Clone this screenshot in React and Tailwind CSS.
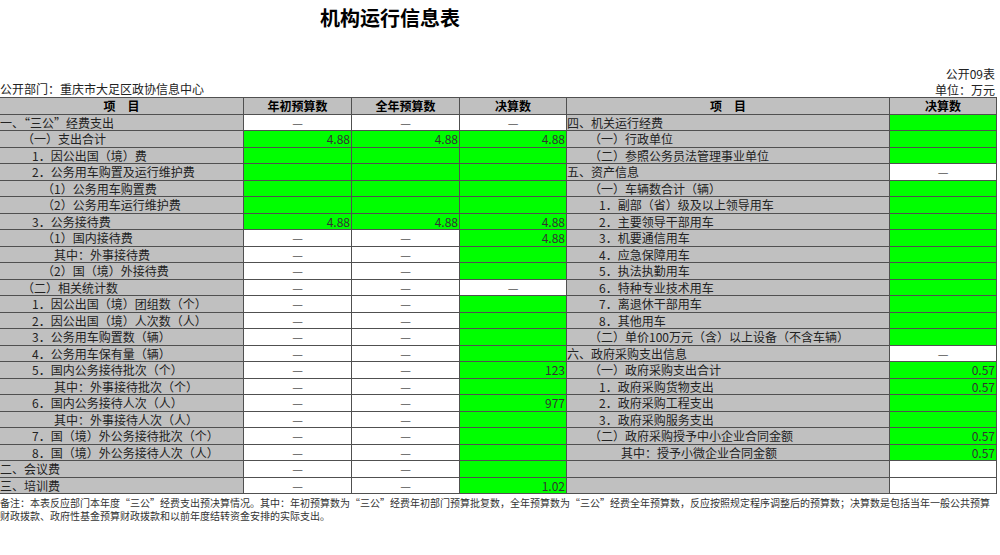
import React from 'react';

const G = 'g', W = 'w';
// left rows: [label, indent, c1, c2, c3] each cell: [bg, text]
const left = [
  ['一、“三公”经费支出', 0, [W, '—'], [W, '—'], [W, '—']],
  ['（一）支出合计', 1, [G, '4.88'], [G, '4.88'], [G, '4.88']],
  ['1．因公出国（境）费', 2, [G], [G], [G]],
  ['2．公务用车购置及运行维护费', 2, [G], [G], [G]],
  ['（1）公务用车购置费', 3, [G], [G], [G]],
  ['（2）公务用车运行维护费', 3, [G], [G], [G]],
  ['3．公务接待费', 2, [G, '4.88'], [G, '4.88'], [G, '4.88']],
  ['（1）国内接待费', 3, [W, '—'], [W, '—'], [G, '4.88']],
  ['其中：外事接待费', 4, [W, '—'], [W, '—'], [G]],
  ['（2）国（境）外接待费', 3, [W, '—'], [W, '—'], [G]],
  ['（二）相关统计数', 1, [W, '—'], [W, '—'], [W, '—']],
  ['1．因公出国（境）团组数（个）', 2, [W, '—'], [W, '—'], [G]],
  ['2．因公出国（境）人次数（人）', 2, [W, '—'], [W, '—'], [G]],
  ['3．公务用车购置数（辆）', 2, [W, '—'], [W, '—'], [G]],
  ['4．公务用车保有量（辆）', 2, [W, '—'], [W, '—'], [G]],
  ['5．国内公务接待批次（个）', 2, [W, '—'], [W, '—'], [G, '123']],
  ['其中：外事接待批次（个）', 4, [W, '—'], [W, '—'], [G]],
  ['6．国内公务接待人次（人）', 2, [W, '—'], [W, '—'], [G, '977']],
  ['其中：外事接待人次（人）', 4, [W, '—'], [W, '—'], [G]],
  ['7．国（境）外公务接待批次（个）', 2, [W, '—'], [W, '—'], [G]],
  ['8．国（境）外公务接待人次（人）', 2, [W, '—'], [W, '—'], [G]],
  ['二、会议费', 0, [W, '—'], [W, '—'], [G]],
  ['三、培训费', 0, [W, '—'], [W, '—'], [G, '1.02']],
];

const right = [
  ['四、机关运行经费', 0, [G]],
  ['（一）行政单位', 1, [G]],
  ['（二）参照公务员法管理事业单位', 1, [G]],
  ['五、资产信息', 0, [W, '—']],
  ['（一）车辆数合计（辆）', 1, [G]],
  ['1．副部（省）级及以上领导用车', 2, [G]],
  ['2．主要领导干部用车', 2, [G]],
  ['3．机要通信用车', 2, [G]],
  ['4．应急保障用车', 2, [G]],
  ['5．执法执勤用车', 2, [G]],
  ['6．特种专业技术用车', 2, [G]],
  ['7．离退休干部用车', 2, [G]],
  ['8．其他用车', 2, [G]],
  ['（二）单价100万元（含）以上设备（不含车辆）', 1, [G]],
  ['六、政府采购支出信息', 0, [W, '—']],
  ['（一）政府采购支出合计', 1, [G, '0.57']],
  ['1．政府采购货物支出', 2, [G, '0.57']],
  ['2．政府采购工程支出', 2, [G]],
  ['3．政府采购服务支出', 2, [G]],
  ['（二）政府采购授予中小企业合同金额', 1, [G, '0.57']],
  ['其中：授予小微企业合同金额', 4, [G, '0.57']],
  ['', 0, [W]],
  ['', 0, [W]],
];

const indents = ['pl-0', 'pl-[22px]', 'pl-[32px]', 'pl-[42px]', 'pl-[54px]'];
const cellB = 'border-r border-b border-[#505050] h-[16.5px] leading-[16px] overflow-hidden whitespace-nowrap';

const Val = ({ c }) => {
  const [bg, t] = c;
  const dash = t === '—';
  return (
    <div className={`${cellB} ${bg === G ? 'bg-[#00ff00]' : 'bg-white'} ${dash ? 'text-center text-[#555]' : 'text-right pr-[1px] text-[#333]'}`}>
      {t || ''}
    </div>
  );
};

const Label = ({ text, ind }) => (
  <div className={`${cellB} bg-[#c0c0c0] text-[#222] ${indents[ind]}`}>{text}</div>
);

export default function App() {
  const head = 'bg-[#c0c0c0] font-bold text-center text-black ' + cellB;
  return (
    <div className="w-[1000px] h-[555px] bg-white text-[12px] text-[#222]" style={{ fontFamily: '"Noto Sans CJK SC", "Liberation Sans", sans-serif' }}>
      <div className="h-[36px] pt-[4px] text-[20px] font-bold text-black pl-[320px] leading-[28px]">机构运行信息表</div>
      <div className="h-[61px] flex items-end justify-between pr-[5px] leading-[14px]">
        <div className="pb-[1px]">公开部门：重庆市大足区政协信息中心</div>
        <div className="text-right">
          <div className="pb-[2px]">公开09表</div>
          <div>单位：万元</div>
        </div>
      </div>
      <div className="grid grid-cols-[244px_108px_108px_107px_323px_107px] w-[997px] border-t border-[#505050]">
        <div className={head}>项　目</div>
        <div className={head}>年初预算数</div>
        <div className={head}>全年预算数</div>
        <div className={head}>决算数</div>
        <div className={head}>项　目</div>
        <div className={head}>决算数</div>
        {left.map((r, i) => (
          <React.Fragment key={i}>
            <Label text={r[0]} ind={r[1]} />
            <Val c={r[2]} />
            <Val c={r[3]} />
            <Val c={r[4]} />
            <Label text={right[i][0]} ind={right[i][1]} />
            <Val c={right[i][2]} />
          </React.Fragment>
        ))}
      </div>
      <div className="text-[10px] leading-[13px] text-[#333] pt-[2px] w-[990px]">
        备注：本表反应部门本年度“三公”经费支出预决算情况。其中：年初预算数为“三公”经费年初部门预算批复数，全年预算数为“三公”经费全年预算数，反应按照规定程序调整后的预算数；决算数是包括当年一般公共预算财政拨款、政府性基金预算财政拨款和以前年度结转资金安排的实际支出。
      </div>
    </div>
  );
}
